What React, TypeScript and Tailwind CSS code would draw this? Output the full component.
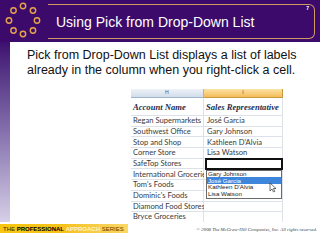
import React from "react";

const rows: [string, string][] = [
  ["Regan Supermarkets", "José Garcia"],
  ["Southwest Office", "Gary Johnson"],
  ["Stop and Shop", "Kathleen D'Alvia"],
  ["Corner Store", "Lisa Watson"],
  ["SafeTop Stores", ""],
  ["International Groceries", ""],
  ["Tom's Foods", ""],
  ["Dominic's Foods", ""],
  ["Diamond Food Stores", ""],
  ["Bryce Groceries", ""],
];

function Logo() {
  const pts: [number, number][] = [
    [23, 6],
    [33, 10.5],
    [37, 20.5],
    [33, 30.5],
    [23, 34],
    [13.5, 30.5],
    [9, 20.5],
    [13.5, 10.5],
  ];
  return (
    <svg width="48" height="42" viewBox="0 0 48 42" className="shrink-0">
      {pts.map(([x, y], i) => (
        <circle key={i} cx={x} cy={y} r="2.7" fill="#3a0a68" stroke="#e7a548" strokeWidth="1.4" />
      ))}
    </svg>
  );
}

export default function App() {
  return (
    <div className="w-[320px] h-[240px] overflow-hidden bg-white flex flex-col" style={{ fontFamily: '"Liberation Sans", Arial, sans-serif' }}>
      <div className="h-[42px] shrink-0 bg-[#3b0a6b] flex">
        <Logo />
        <div className="relative flex-1 mt-[4px] mb-[3px] mr-[5px] border-t-[1.5px] border-b-[1.5px] border-r-[1.5px] border-[#d19a62] rounded-r-[6px] flex items-center pl-[8px]">
          <span className="text-white text-[14px] leading-none">Using Pick from Drop-Down List</span>
          <span className="absolute top-[1px] right-[5px] text-white text-[5px] font-bold leading-none">7</span>
        </div>
      </div>
      <div className="h-[180px] shrink-0 flex">
        <div className="w-[10px] bg-linear-to-b from-[#3f0e70] to-[#d7d0e7]" />
        <div className="flex-1 bg-white pl-[17px] pt-[6px] overflow-hidden flex flex-col">
          <p className="text-[12.5px] leading-[15px] text-[#111]">
            Pick from Drop-Down List displays a list of labels
            <br />
            already in the column when you right-click a cell.
          </p>
          <div className="relative ml-[104px] mt-[11px] w-[152px]" style={{ fontFamily: "Lato, 'Liberation Sans', sans-serif" }}>
            <div className="grid grid-cols-[73px_79px]">
              <div className="h-[9px] bg-linear-to-b from-[#eef2f8] to-[#d2dcea] border-r border-b border-[#9eb6ce] flex items-center justify-center text-[5px] text-[#555]">H</div>
              <div className="h-[9px] bg-linear-to-b from-[#fbe2a4] to-[#f4bd55] border-r border-b border-[#c99a40] flex items-center justify-center text-[5px] text-[#555]">I</div>
              <div className="h-[18px] border-r border-b border-[#dde2ea] flex items-end pl-[2px] pb-[1.5px] text-[8.6px] font-bold italic text-[#1f2d4a] whitespace-nowrap" style={{ fontFamily: '"Liberation Serif", serif' }}>Account Name</div>
              <div className="h-[18px] border-r border-b border-[#dde2ea] flex items-end pl-[2px] pb-[1.5px] text-[8.6px] font-bold italic text-[#1f2d4a] whitespace-nowrap" style={{ fontFamily: '"Liberation Serif", serif' }}>Sales Representative</div>
              {rows.map(([a, b], i) => (
                <React.Fragment key={i}>
                  <div className="h-[10.7px] border-r border-b border-[#dde2ea] flex items-center pl-[2px] text-[7.6px] text-[#3a3a3a] whitespace-nowrap overflow-visible">{a}</div>
                  <div className="h-[10.7px] border-r border-b border-[#dde2ea] flex items-center pl-[3px] text-[7.6px] text-[#3a3a3a] whitespace-nowrap bg-white">{b}</div>
                </React.Fragment>
              ))}
            </div>
            <div className="absolute left-[74px] top-[69.3px] w-[78px] h-[11.5px] border-2 border-[#111] bg-white" />
            <div className="absolute left-[75px] top-[80.5px] w-[76px] h-[29px] border border-[#6a6a6a] bg-white flex flex-col text-[6.2px] text-[#222] leading-none" style={{ fontFamily: '"Liberation Sans", sans-serif' }}>
              <div className="h-[7px] flex items-center pl-[1px]">Gary Johnson</div>
              <div className="h-[7px] flex items-center pl-[1px] bg-[#3d86dc] text-white">José Garcia</div>
              <div className="h-[7px] flex items-center pl-[1px]">Kathleen D'Alvia</div>
              <div className="h-[7px] flex items-center pl-[1px]">Lisa Watson</div>
              <svg className="absolute left-[62px] top-[11px]" width="8" height="11" viewBox="0 0 8 11">
                <path d="M1 1 L1 9 L3 7 L4.5 10 L5.8 9.4 L4.4 6.5 L7 6.5 Z" fill="#fff" stroke="#333" strokeWidth="0.7" />
              </svg>
            </div>
          </div>
        </div>
      </div>
      <div className="flex-1 bg-white flex items-start">
        <div className="mt-[2px] h-[9px] w-[128px] bg-linear-to-r from-[#f7c610] via-[#f5c21a] to-[#f9d865] flex items-center pl-[3px] text-[6px] leading-none whitespace-nowrap">
          <span className="text-[#3a2a00]">THE&nbsp;</span>
          <span className="font-bold text-black">PROFESSIONAL&nbsp;</span>
          <span className="font-bold text-[#fff3c0]">APPROACH&nbsp;</span>
          <span className="text-[#5a4000]">SERIES</span>
        </div>
        <div className="ml-auto mr-[3px] mt-[3.5px] text-[4.8px] italic text-[#444] whitespace-nowrap" style={{ fontFamily: '"Liberation Serif", serif' }}>
          © 2008 The McGraw-Hill Companies, Inc. All rights reserved.
        </div>
      </div>
    </div>
  );
}
